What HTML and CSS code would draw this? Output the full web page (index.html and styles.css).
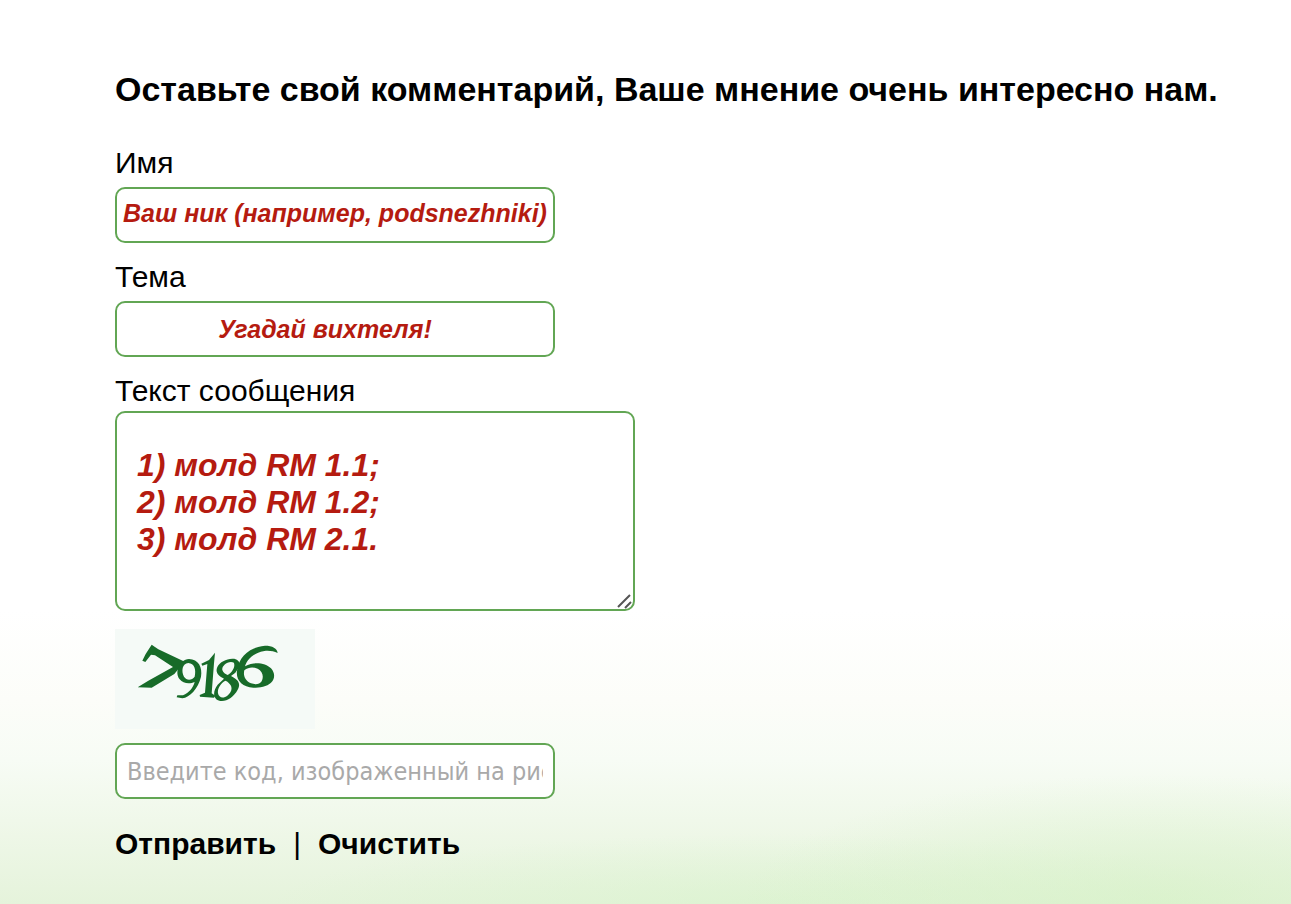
FILE: index.html
```html
<!DOCTYPE html>
<html lang="ru">
<head>
<meta charset="utf-8">
<meta name="viewport" content="width=device-width, initial-scale=1">
<title>Комментарий</title>
<link rel="stylesheet" href="styles.css">
</head>
<body>
<main class="page">
  <h1 class="title">Оставьте свой комментарий, Ваше мнение очень интересно нам.</h1>
  <form class="form">
    <div class="field">
      <label class="label" for="name">Имя</label>
      <input class="input input-name" id="name" type="text" value="Ваш ник (например, podsnezhniki)">
    </div>
    <div class="field">
      <label class="label" for="topic">Тема</label>
      <input class="input input-topic" id="topic" type="text" value="Угадай вихтеля!">
    </div>
    <div class="field field-message">
      <label class="label" for="message">Текст сообщения</label>
      <div class="message-box">
        <textarea class="input message" id="message">1) молд RM 1.1;
2) молд RM 1.2;
3) молд RM 2.1.</textarea>
        <svg class="grip" viewBox="0 0 16 16" aria-hidden="true"><path d="M2 13L14 1M9 14L15 8"/></svg>
      </div>
    </div>
    <svg class="captcha" viewBox="30 27 600 300" role="img" aria-label="Код">
      <g class="ink">
        <path d="M140 74L160 88L236 124L226 140L208 162L140 203L98 202L130 182L204 141L150 106L138 104L121 126L112 122L122 102Z"/>
        <path fill-rule="evenodd" d="M252 117C280 117 293 142 288 170C280 206 254 232 232 235L215 232L217 226L234 226C252 218 264 204 269 186C254 193 234 191 224 178C208 158 222 119 252 117ZM250 129C232 130 228 153 237 170C245 183 261 181 269 170C274 149 268 130 250 129Z"/>
        <path d="M330 98L327 130L320 220L331 227L327 233L285 230L284 225L300 218L307 132L292 137L289 131L312 120Z"/>
        <path fill-rule="evenodd" d="M382 116C399 115 409 129 401 143L391 158L378 168C398 178 409 190 398 209C386 232 362 247 343 242C322 236 324 211 338 194L357 176C340 168 330 157 337 141C344 126 363 117 382 116ZM378 126C362 127 350 140 352 150C354 158 362 163 368 165C382 157 388 144 388 135C388 128 385 126 378 126ZM361 182C345 191 337 207 339 220C341 234 356 236 367 227C378 218 383 206 377 196C373 190 369 185 361 182Z"/>
        <path fill-rule="evenodd" d="M518 99C506 94 493 91 478 93C448 98 426 118 420 139C446 124 482 129 498 145C511 159 510 178 498 188C486 200 464 203 445 203C411 202 392 180 396 152C401 109 437 80 480 77C502 77 517 85 518 99ZM418 151C414 166 420 182 438 190C449 194 464 194 470 184C477 170 473 154 458 146C444 140 430 141 418 151Z"/>
      </g>
    </svg>
    <input class="input input-code" type="text" aria-label="Код с рисунка" placeholder="Введите код, изображенный на рисунке">
    <div class="actions">
      <button class="action" type="submit">Отправить</button>
      <span>|</span>
      <button class="action" type="reset">Очистить</button>
    </div>
  </form>
</main>
</body>
</html>
```
FILE: styles.css
```css
* {
  box-sizing: border-box;
}

body {
  margin: 0;
  min-height: 100vh;
  color: #000;
  font-family: "Liberation Sans", Arial, sans-serif;
  background:
    radial-gradient(ellipse 420px 130px at 90% 100%, rgba(212, 241, 196, 0.6), transparent),
    radial-gradient(ellipse 500px 70px at 60% 100%, rgba(216, 243, 204, 0.6), transparent),
    linear-gradient(#fff 0, #fff 610px, #fcfdf9 700px, #f7fcf5 760px, #f0f8ea 820px, #e5f3db 904px);
}

.page {
  padding: 69px 20px 40px 115px;
}

.title {
  margin: 0 0 53px;
  font-size: 34px;
  line-height: 40px;
  font-weight: bold;
}

.form {
  display: flex;
  flex-direction: column;
  align-items: flex-start;
}

.field {
  display: flex;
  flex-direction: column;
  width: 100%;
  margin-top: -16px;
  margin-bottom: 33px;
}

.field-message {
  margin-bottom: 18px;
}

.label {
  font-size: 30px;
  line-height: 34px;
  padding-bottom: 7px;
}

.field-message .label {
  padding-bottom: 3px;
}

.input {
  width: 100%;
  max-width: 440px;
  height: 56px;
  border: 2px solid #62a654;
  border-radius: 10px;
  background: #fff;
  color: #b51b10;
  font: italic bold 25px/30px "Liberation Sans", Arial, sans-serif;
  outline: none;
}

.input-name {
  padding: 0 0 4px;
  text-align: center;
}

.input-topic {
  padding: 0 20px 0 0;
  text-align: center;
}

.message-box {
  position: relative;
  width: 100%;
  max-width: 520px;
}

.message {
  display: block;
  max-width: none;
  height: 200px;
  padding: 34px 20px 20px;
  resize: none;
  font-size: 32px;
  line-height: 37px;
}

.grip {
  position: absolute;
  right: 3px;
  bottom: 1px;
  width: 16px;
  height: 16px;
  fill: none;
  stroke: #555;
  stroke-width: 2;
}

.captcha {
  width: 200px;
  height: 100px;
  margin-bottom: 14px;
  background: #f5faf7;
}

.ink {
  fill: #176b29;
  filter: blur(2px);
}

.input-code {
  padding: 0 10px;
  font: 25px/30px "DejaVu Sans Condensed", "DejaVu Sans", sans-serif;
}

.input-code::placeholder {
  color: #a9a9a9;
  opacity: 1;
}

.actions {
  display: flex;
  gap: 17px;
  margin-top: 28px;
  font-size: 30px;
  line-height: 34px;
}

.action {
  padding: 0;
  border: 0;
  background: none;
  color: inherit;
  font: inherit;
  font-weight: bold;
  cursor: pointer;
}
```
